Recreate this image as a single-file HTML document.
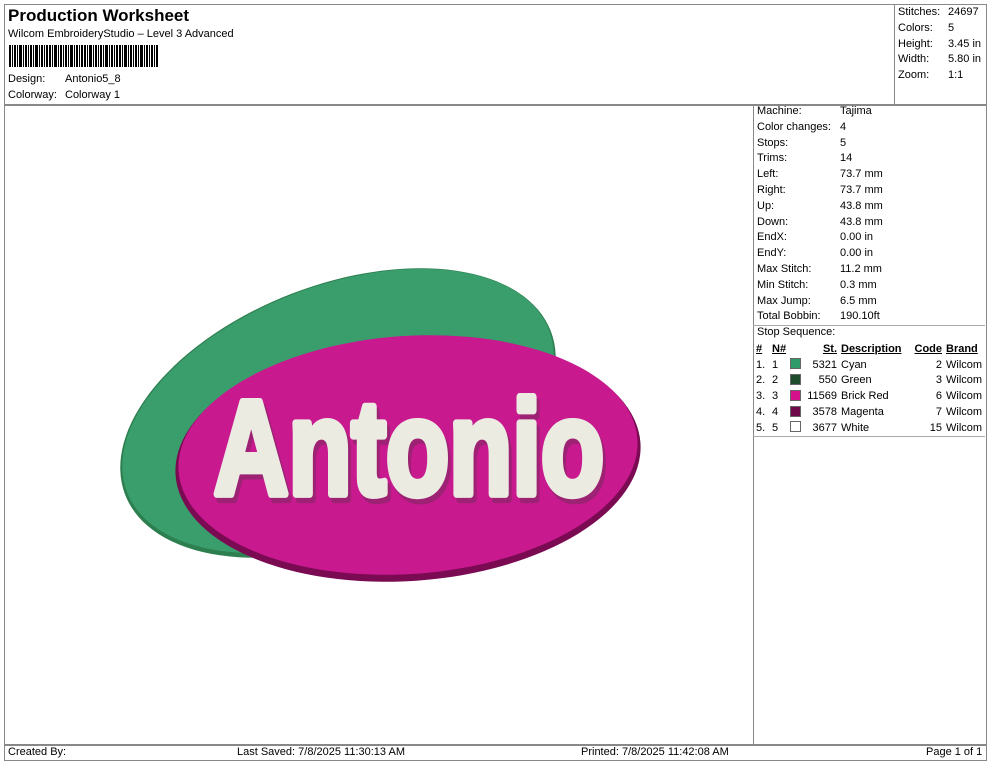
<!DOCTYPE html>
<html><head><meta charset="utf-8"><style>
body{margin:0;width:990px;height:762px;background:#fff;font-family:"Liberation Sans",Arial,sans-serif;font-size:11px;color:#000;position:relative;overflow:hidden}
.a{position:absolute;white-space:nowrap}
.box{position:absolute;border:1px solid #999}
table{border-collapse:collapse;font-size:11px}
td{padding:0;height:15.8px;white-space:nowrap}
.sw{display:inline-block;width:9px;height:9px;border:1px solid #666;vertical-align:-1px}
</style></head><body>
<div class="box" style="left:4px;top:4px;width:981px;height:100px;border-color:#888"></div>
<div class="box" style="left:894px;top:4px;width:91px;height:100px;border-color:#888"></div>
<div class="a" style="left:8px;top:6px;font-size:17px;font-weight:bold">Production Worksheet</div>
<div class="a" style="left:8px;top:28px">Wilcom EmbroideryStudio – Level 3 Advanced</div>
<svg class="a" style="left:9px;top:45px" width="150" height="22">
<g fill="#000">
<rect x="0" width="2" height="22"/><rect x="3" width="1" height="22"/><rect x="5" width="2" height="22"/><rect x="8" width="1" height="22"/><rect x="10" width="3" height="22"/><rect x="14" width="1" height="22"/><rect x="16" width="2" height="22"/><rect x="19" width="1" height="22"/><rect x="21" width="2" height="22"/><rect x="24" width="1" height="22"/><rect x="26" width="3" height="22"/><rect x="30" width="1" height="22"/><rect x="32" width="2" height="22"/><rect x="35" width="1" height="22"/><rect x="37" width="2" height="22"/><rect x="40" width="2" height="22"/><rect x="43" width="1" height="22"/><rect x="45" width="3" height="22"/><rect x="49" width="1" height="22"/><rect x="51" width="2" height="22"/><rect x="54" width="1" height="22"/><rect x="56" width="2" height="22"/><rect x="59" width="1" height="22"/><rect x="61" width="3" height="22"/><rect x="65" width="1" height="22"/><rect x="67" width="2" height="22"/><rect x="70" width="1" height="22"/><rect x="72" width="2" height="22"/><rect x="75" width="2" height="22"/><rect x="78" width="1" height="22"/><rect x="80" width="3" height="22"/><rect x="84" width="1" height="22"/><rect x="86" width="2" height="22"/><rect x="89" width="1" height="22"/><rect x="91" width="2" height="22"/><rect x="94" width="1" height="22"/><rect x="96" width="3" height="22"/><rect x="100" width="1" height="22"/><rect x="102" width="2" height="22"/><rect x="105" width="1" height="22"/><rect x="107" width="2" height="22"/><rect x="110" width="2" height="22"/><rect x="113" width="1" height="22"/><rect x="115" width="3" height="22"/><rect x="119" width="1" height="22"/><rect x="121" width="2" height="22"/><rect x="124" width="1" height="22"/><rect x="126" width="2" height="22"/><rect x="129" width="1" height="22"/><rect x="131" width="3" height="22"/><rect x="135" width="1" height="22"/><rect x="137" width="2" height="22"/><rect x="140" width="1" height="22"/><rect x="142" width="2" height="22"/><rect x="145" width="1" height="22"/><rect x="147" width="2" height="22"/>
</g></svg>
<div class="a" style="left:8px;top:73px">Design:</div><div class="a" style="left:65px;top:73px">Antonio5_8</div>
<div class="a" style="left:8px;top:89px">Colorway:</div><div class="a" style="left:65px;top:89px">Colorway 1</div>
<div class="a" style="left:898px;top:5px;line-height:15.8px">Stitches:<br>Colors:<br>Height:<br>Width:<br>Zoom:</div>
<div class="a" style="left:948px;top:5px;line-height:15.8px">24697<br>5<br>3.45 in<br>5.80 in<br>1:1</div>

<div class="box" style="left:4px;top:104px;width:981px;height:640px;border-color:#888"></div>
<div class="box" style="left:753px;top:104px;width:232px;height:640px;border-color:#888;border-width:0 0 0 1px"></div>
<div class="a" style="left:753px;top:325px;width:232px;border-top:1px solid #aaa"></div>
<div class="a" style="left:753px;top:436px;width:232px;border-top:1px solid #aaa"></div>
<div class="a" style="left:757px;top:104px;line-height:15.8px">Machine:<br>Color changes:<br>Stops:<br>Trims:<br>Left:<br>Right:<br>Up:<br>Down:<br>EndX:<br>EndY:<br>Max Stitch:<br>Min Stitch:<br>Max Jump:<br>Total Bobbin:<br>Stop Sequence:</div>
<div class="a" style="left:840px;top:104px;line-height:15.8px">Tajima<br>4<br>5<br>14<br>73.7 mm<br>73.7 mm<br>43.8 mm<br>43.8 mm<br>0.00 in<br>0.00 in<br>11.2 mm<br>0.3 mm<br>6.5 mm<br>190.10ft</div>
<table class="a" style="left:756px;top:341px">
<tr style="font-weight:bold;text-decoration:underline"><td style="width:16px">#</td><td style="width:18px">N#</td><td style="width:12px"></td><td style="width:35px;text-align:right;padding-right:4px">St.</td><td style="width:68px">Description</td><td style="width:33px;text-align:right;padding-right:4px">Code</td><td>Brand</td></tr>
<tr><td>1.</td><td>1</td><td><span class="sw" style="background:#2f9a6a"></span></td><td style="text-align:right;padding-right:4px">5321</td><td>Cyan</td><td style="text-align:right;padding-right:4px">2</td><td>Wilcom</td></tr>
<tr><td>2.</td><td>2</td><td><span class="sw" style="background:#1d4d2c"></span></td><td style="text-align:right;padding-right:4px">550</td><td>Green</td><td style="text-align:right;padding-right:4px">3</td><td>Wilcom</td></tr>
<tr><td>3.</td><td>3</td><td><span class="sw" style="background:#d4108a"></span></td><td style="text-align:right;padding-right:4px">11569</td><td>Brick Red</td><td style="text-align:right;padding-right:4px">6</td><td>Wilcom</td></tr>
<tr><td>4.</td><td>4</td><td><span class="sw" style="background:#6e0a4a"></span></td><td style="text-align:right;padding-right:4px">3578</td><td>Magenta</td><td style="text-align:right;padding-right:4px">7</td><td>Wilcom</td></tr>
<tr><td>5.</td><td>5</td><td><span class="sw" style="background:#fff"></span></td><td style="text-align:right;padding-right:4px">3677</td><td>White</td><td style="text-align:right;padding-right:4px">15</td><td>Wilcom</td></tr>
</table>

<svg class="a" style="left:0;top:0" width="750" height="740">
<ellipse cx="338" cy="413" rx="228" ry="128" transform="rotate(-21 338 413)" fill="#2e7f50"/>
<ellipse cx="338" cy="411" rx="226" ry="125" transform="rotate(-21 338 411)" fill="#3a9e6c"/>
<ellipse cx="408" cy="459" rx="233" ry="122" transform="rotate(-4 408 459)" fill="#7a0a52"/>
<ellipse cx="408" cy="455" rx="230" ry="119" transform="rotate(-4 408 455)" fill="#c8198f"/>
<g transform="scale(1,1.3)">
<text x="217" y="384" font-family="Liberation Sans" font-weight="bold" font-size="103" textLength="390" lengthAdjust="spacing" fill="#7a2a5e" stroke="#7a2a5e" stroke-width="6" stroke-linejoin="round" opacity="0.55">Antonio</text>
<text x="214" y="380" font-family="Liberation Sans" font-weight="bold" font-size="103" textLength="390" lengthAdjust="spacing" fill="#ecebe2" stroke="#ecebe2" stroke-width="6" stroke-linejoin="round">Antonio</text>
</g>
</svg>

<div class="box" style="left:4px;top:744px;width:981px;height:15px;border-color:#888"></div>
<div class="a" style="left:8px;top:746px">Created By:</div>
<div class="a" style="left:237px;top:746px">Last Saved: 7/8/2025 11:30:13 AM</div>
<div class="a" style="left:581px;top:746px">Printed: 7/8/2025 11:42:08 AM</div>
<div class="a" style="left:926px;top:746px">Page 1 of 1</div>
</body></html>
